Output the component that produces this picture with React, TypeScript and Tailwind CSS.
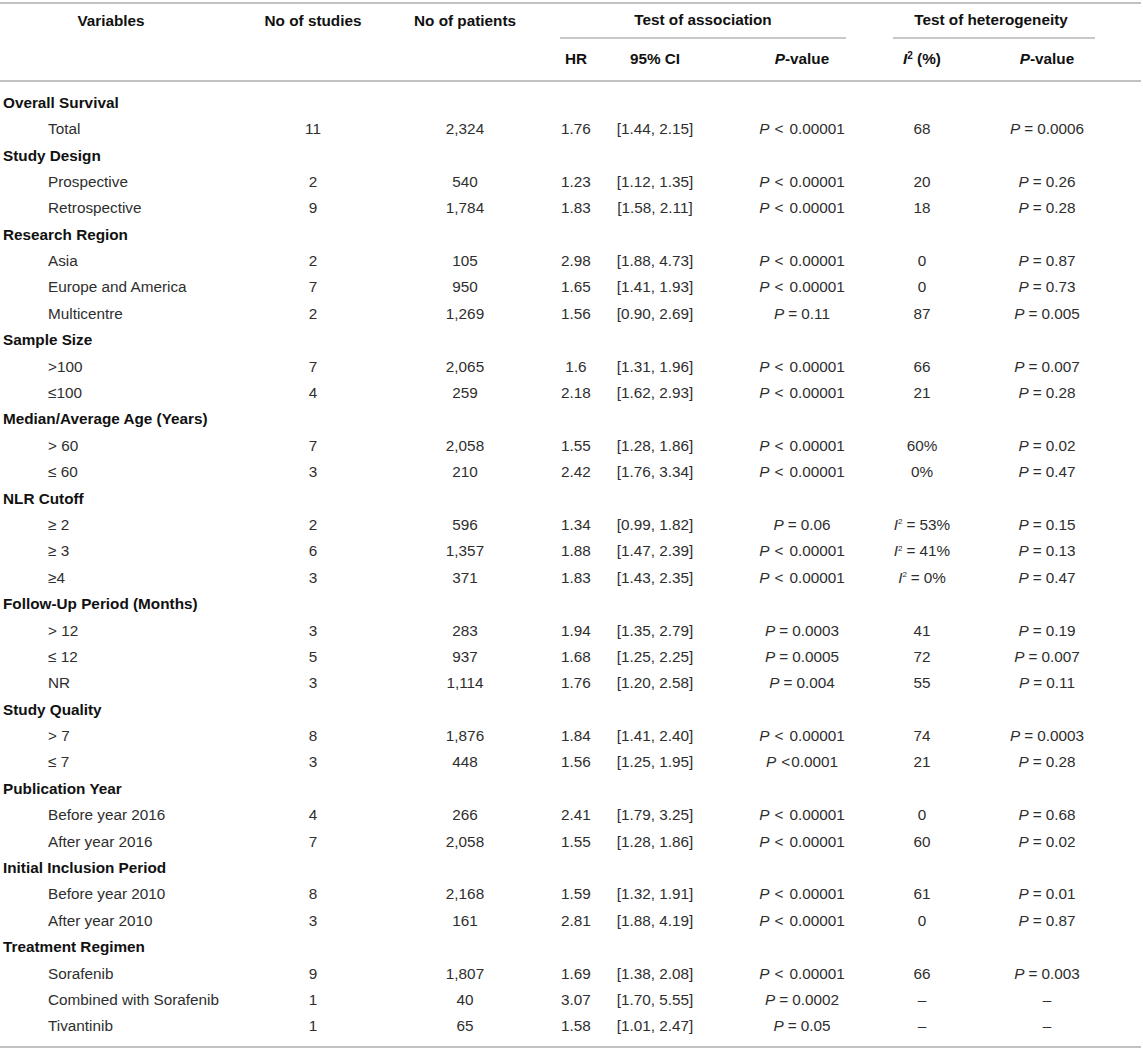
import React from "react";

type Row =
  | { g: string }
  | { l: string; v: [string, string, string, string, string, string, string] };

const rows: Row[] = [
  { g: "Overall Survival" },
  { l: "Total", v: ["11", "2,324", "1.76", "[1.44, 2.15]", "P < 0.00001", "68", "P = 0.0006"] },
  { g: "Study Design" },
  { l: "Prospective", v: ["2", "540", "1.23", "[1.12, 1.35]", "P < 0.00001", "20", "P = 0.26"] },
  { l: "Retrospective", v: ["9", "1,784", "1.83", "[1.58, 2.11]", "P < 0.00001", "18", "P = 0.28"] },
  { g: "Research Region" },
  { l: "Asia", v: ["2", "105", "2.98", "[1.88, 4.73]", "P < 0.00001", "0", "P = 0.87"] },
  { l: "Europe and America", v: ["7", "950", "1.65", "[1.41, 1.93]", "P < 0.00001", "0", "P = 0.73"] },
  { l: "Multicentre", v: ["2", "1,269", "1.56", "[0.90, 2.69]", "P = 0.11", "87", "P = 0.005"] },
  { g: "Sample Size" },
  { l: ">100", v: ["7", "2,065", "1.6", "[1.31, 1.96]", "P < 0.00001", "66", "P = 0.007"] },
  { l: "≤100", v: ["4", "259", "2.18", "[1.62, 2.93]", "P < 0.00001", "21", "P = 0.28"] },
  { g: "Median/Average Age (Years)" },
  { l: "> 60", v: ["7", "2,058", "1.55", "[1.28, 1.86]", "P < 0.00001", "60%", "P = 0.02"] },
  { l: "≤ 60", v: ["3", "210", "2.42", "[1.76, 3.34]", "P < 0.00001", "0%", "P = 0.47"] },
  { g: "NLR Cutoff" },
  { l: "≥ 2", v: ["2", "596", "1.34", "[0.99, 1.82]", "P = 0.06", "I = 53%", "P = 0.15"] },
  { l: "≥ 3", v: ["6", "1,357", "1.88", "[1.47, 2.39]", "P < 0.00001", "I = 41%", "P = 0.13"] },
  { l: "≥4", v: ["3", "371", "1.83", "[1.43, 2.35]", "P < 0.00001", "I = 0%", "P = 0.47"] },
  { g: "Follow-Up Period (Months)" },
  { l: "> 12", v: ["3", "283", "1.94", "[1.35, 2.79]", "P = 0.0003", "41", "P = 0.19"] },
  { l: "≤ 12", v: ["5", "937", "1.68", "[1.25, 2.25]", "P = 0.0005", "72", "P = 0.007"] },
  { l: "NR", v: ["3", "1,114", "1.76", "[1.20, 2.58]", "P = 0.004", "55", "P = 0.11"] },
  { g: "Study Quality" },
  { l: "> 7", v: ["8", "1,876", "1.84", "[1.41, 2.40]", "P < 0.00001", "74", "P = 0.0003"] },
  { l: "≤ 7", v: ["3", "448", "1.56", "[1.25, 1.95]", "P <0.0001", "21", "P = 0.28"] },
  { g: "Publication Year" },
  { l: "Before year 2016", v: ["4", "266", "2.41", "[1.79, 3.25]", "P < 0.00001", "0", "P = 0.68"] },
  { l: "After year 2016", v: ["7", "2,058", "1.55", "[1.28, 1.86]", "P < 0.00001", "60", "P = 0.02"] },
  { g: "Initial Inclusion Period" },
  { l: "Before year 2010", v: ["8", "2,168", "1.59", "[1.32, 1.91]", "P < 0.00001", "61", "P = 0.01"] },
  { l: "After year 2010", v: ["3", "161", "2.81", "[1.88, 4.19]", "P < 0.00001", "0", "P = 0.87"] },
  { g: "Treatment Regimen" },
  { l: "Sorafenib", v: ["9", "1,807", "1.69", "[1.38, 2.08]", "P < 0.00001", "66", "P = 0.003"] },
  { l: "Combined with Sorafenib", v: ["1", "40", "3.07", "[1.70, 5.55]", "P = 0.0002", "–", "–"] },
  { l: "Tivantinib", v: ["1", "65", "1.58", "[1.01, 2.47]", "P = 0.05", "–", "–"] },
];

const colCls = [
  "ml-[40px] w-[102px]",
  "ml-[46px] w-[110px]",
  "ml-[26px] w-[60px]",
  "ml-[4px] w-[90px]",
  "ml-[52px] w-[100px]",
  "ml-[30px] w-[80px]",
  "ml-[35px] w-[100px]",
];

function Expr({ lead, s }: { lead: React.ReactNode; s: string }) {
  const m = s.match(/^\s*([<=])(\s*)(.*)$/);
  if (!m) return <span>{lead}{s}</span>;
  const op = m[1];
  const tight = m[2].length === 0;
  return (
    <span>
      {lead}
      <span className={op === "<" ? (tight ? "ml-[5px] mr-[1px]" : "ml-[5px] mr-[6px]") : "mx-[4px]"}>{op}</span>
      {m[3]}
    </span>
  );
}

function Val({ s }: { s: string }) {
  if (s.startsWith("P")) {
    return <Expr lead={<i>P</i>} s={s.slice(1)} />;
  }
  if (s.startsWith("I ")) {
    return (
      <Expr
        lead={
          <>
            <i>I</i>
            <sup className="top-[-0.7em] text-[8px]">2</sup>
          </>
        }
        s={s.slice(1)}
      />
    );
  }
  return <span>{s}</span>;
}

function Cell({ i, children }: { i: number; children?: React.ReactNode }) {
  return (
    <div className={`${colCls[i]} flex shrink-0 justify-center whitespace-nowrap`}>{children}</div>
  );
}

export default function App() {
  return (
    <div className="w-[1143px] bg-white font-['Liberation_Sans',Arial,sans-serif] text-[15.3px] text-[#1e1e1e]">
      <div className="pt-[2px]">
        <div className="h-[2px] w-[1141px] bg-[#c2c2c2]" />
      </div>
      {/* header row 1 */}
      <div className="flex h-[35px] items-center font-bold text-[#111]">
        <div className="flex w-[222px] shrink-0 justify-center">Variables</div>
        <Cell i={0}>No of studies</Cell>
        <Cell i={1}>No of patients</Cell>
        <div className="ml-[40px] flex h-full w-[286px] shrink-0 items-center justify-center border-b-2 border-[#c8c8c8]">
          Test of association
        </div>
        <div className="ml-[47px] flex h-full w-[202px] shrink-0 items-center justify-center border-b-2 border-[#c8c8c8]">
          <span className="mr-[6px]">Test of heterogeneity</span>
        </div>
      </div>
      {/* header row 2 */}
      <div className="flex h-[41px] items-center font-bold text-[#111]">
        <div className="w-[222px] shrink-0" />
        <Cell i={0} />
        <Cell i={1} />
        <Cell i={2}>HR</Cell>
        <Cell i={3}>95% CI</Cell>
        <Cell i={4}>
          <span>
            <i>P</i>-value
          </span>
        </Cell>
        <Cell i={5}>
          <span>
            <i>I</i>
            <sup className="text-[10px]">2</sup> (%)
          </span>
        </Cell>
        <Cell i={6}>
          <span>
            <i>P</i>-value
          </span>
        </Cell>
      </div>
      <div className="h-[2px] w-[1141px] bg-[#c2c2c2]" />
      {/* body */}
      <div className="pt-[8px] pb-[6px]">
        {rows.map((r, idx) =>
          "g" in r ? (
            <div key={idx} className="flex h-[26.4px] items-center pl-[3px] font-bold text-[#111]">
              {r.g}
            </div>
          ) : (
            <div key={idx} className="flex h-[26.4px] items-center text-[#2e2e2e]">
              <div className="w-[222px] shrink-0 whitespace-nowrap pl-[48px]">{r.l}</div>
              {r.v.map((s, j) => (
                <Cell key={j} i={j}>
                  <Val s={s} />
                </Cell>
              ))}
            </div>
          )
        )}
      </div>
      <div className="h-[2px] w-[1141px] bg-[#c2c2c2]" />
    </div>
  );
}
